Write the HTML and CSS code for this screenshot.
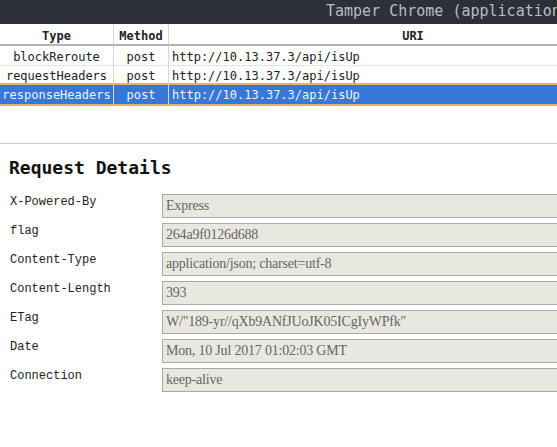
FILE: index.html
```html
<!DOCTYPE html>
<html>
<head>
<meta charset="utf-8">
<link rel="stylesheet" href="styles.css">
</head>
<body>
<div class="titlebar"><span class="title">Tamper Chrome (application mode)</span></div>
<div class="list-pane">
  <table class="req-table">
    <thead>
      <tr><th class="c-type">Type</th><th class="c-method">Method</th><th class="c-uri">URI</th></tr>
    </thead>
    <tbody>
      <tr><td class="c-type">blockReroute</td><td class="c-method">post</td><td class="c-uri">http://10.13.37.3/api/isUp</td></tr>
      <tr class="before-selected"><td class="c-type">requestHeaders</td><td class="c-method">post</td><td class="c-uri">http://10.13.37.3/api/isUp</td></tr>
      <tr class="selected"><td class="c-type">responseHeaders</td><td class="c-method">post</td><td class="c-uri">http://10.13.37.3/api/isUp</td></tr>
    </tbody>
  </table>
</div>
<div class="details">
  <h2 class="details-title">Request Details</h2>
  <div class="fields">
    <div class="field"><span class="label">X-Powered-By</span><input class="value" value="Express" readonly></div>
    <div class="field"><span class="label">flag</span><input class="value" value="264a9f0126d688" readonly></div>
    <div class="field"><span class="label">Content-Type</span><input class="value" value="application/json; charset=utf-8" readonly></div>
    <div class="field"><span class="label">Content-Length</span><input class="value" value="393" readonly></div>
    <div class="field"><span class="label">ETag</span><input class="value" value='W/"189-yr//qXb9ANfJUoJK05ICgIyWPfk"' readonly></div>
    <div class="field"><span class="label">Date</span><input class="value" value="Mon, 10 Jul 2017 01:02:03 GMT" readonly></div>
    <div class="field"><span class="label">Connection</span><input class="value" value="keep-alive" readonly></div>
  </div>
</div>
</body>
</html>
```
FILE: styles.css
```css
html, body {
  margin: 0;
  padding: 0;
  background: #ffffff;
  overflow: hidden;
}
body {
  width: 557px;
  height: 447px;
  font-family: "DejaVu Sans Mono", monospace;
}
.titlebar {
  height: 24px;
  background: #2e3039;
  color: #b9bcc3;
  font-size: 15px;
  line-height: 22px;
  white-space: nowrap;
  overflow: hidden;
  padding-left: 326px;
}
.list-pane {
  height: 120px;
  border-bottom: 1px solid #cccccc;
  box-sizing: border-box;
}
.req-table {
  width: 100%;
  border-collapse: separate;
  border-spacing: 0;
  font-size: 12px;
  color: #222222;
}
.req-table th,
.req-table td {
  box-sizing: border-box;
  padding: 0;
  text-align: center;
  line-height: 14px;
}
.req-table th {
  height: 22px;
  padding-top: 3px;
  font-weight: bold;
  border-bottom: 2px solid #b5b5b5;
}
.req-table td {
  height: 20px;
  padding-top: 2px;
  border-bottom: 1px solid #e4e4e4;
}
.req-table .c-type { width: 114px; border-right: 1px solid #d6d6d6; }
.req-table .c-method { width: 55px; border-right: 1px solid #d6d6d6; }
.req-table td.c-uri { text-align: left; padding-left: 3px; }
.req-table th.c-uri { padding-left: 100px; }
.req-table tr.before-selected td {
  height: 17px;
  border-bottom: 0;
}
.req-table tr.selected td {
  height: 23px;
  padding-top: 0;
  background: #3677d7;
  color: #eef3ff;
  border-top: 2px solid #e2b56c;
  border-bottom: 2px solid #e2b56c;
}
.details {
  padding: 12px 0 0 9px;
}
.details-title {
  margin: 0;
  font-size: 18px;
  font-weight: bold;
  line-height: 24px;
  color: #111111;
}
.fields {
  display: flex;
  flex-direction: column;
  gap: 5px;
  margin-top: 14px;
}
.field {
  display: flex;
  height: 24px;
}
.label {
  flex: 0 0 152px;
  padding-left: 1px;
  padding-top: 1px;
  font-family: "Liberation Mono", monospace;
  font-size: 12px;
  line-height: 14px;
  color: #222222;
}
.value {
  flex: 0 0 420px;
  height: 24px;
  box-sizing: border-box;
  margin: 0;
  padding: 0 3px;
  border: 1px solid #a9a9a9;
  background: #e9e8e0;
  color: #666666;
  font-family: "Liberation Serif", serif;
  font-size: 14px;
  letter-spacing: -0.2px;
  outline: none;
}
```
